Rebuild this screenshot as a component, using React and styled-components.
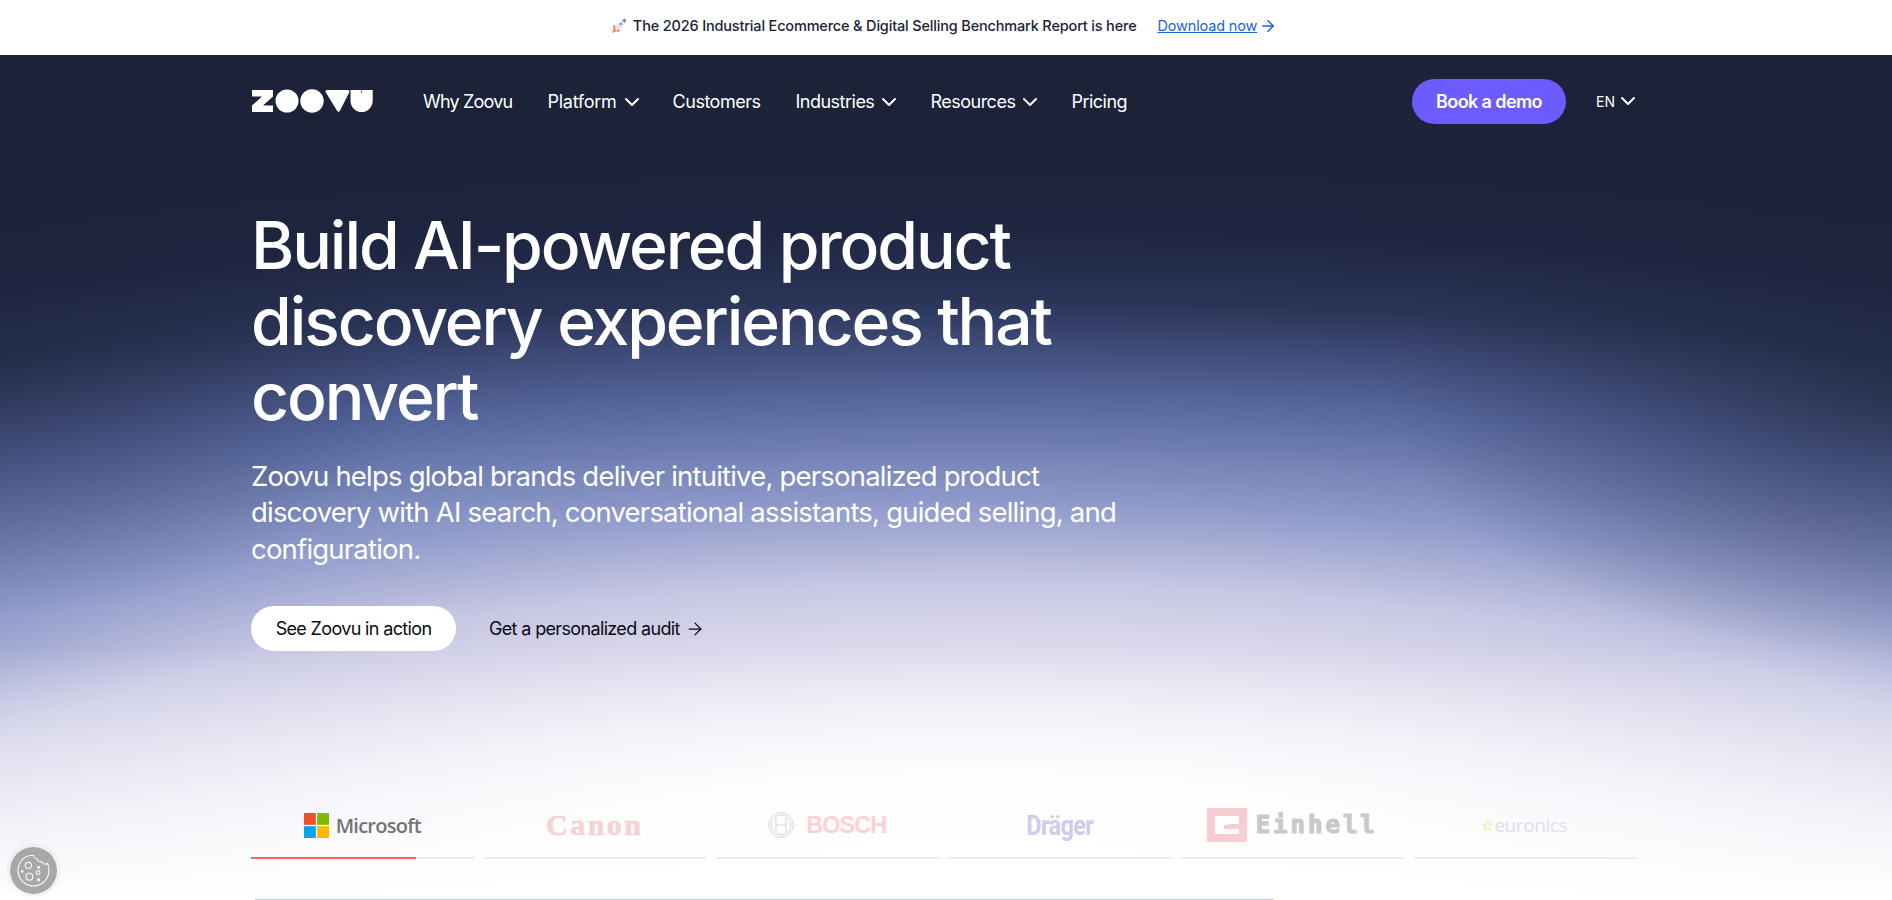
import React from "react";
import styled, { createGlobalStyle } from "styled-components";
import { ChevronDown, ArrowRight } from "lucide-react";

const GlobalStyle = createGlobalStyle`
  * { box-sizing: border-box; }
  html, body { margin: 0; padding: 0; background: #fff; overflow: hidden; }
  body { font-family: Inter, "Liberation Sans", sans-serif; color: #111; }
`;

const Page = styled.div`
  width: 1892px;
  height: 900px;
  overflow: hidden;
  position: relative;
`;

const Announce = styled.div`
  height: 55px;
  background: #fff;
  display: flex;
  align-items: center;
  justify-content: center;
  gap: 21px;
  font-size: 14.5px;
  font-weight: 500;
  letter-spacing: -0.17px;
  color: #1c2338;
  padding: 0 4px 4px 0;
`;

const AnnounceText = styled.span`
  display: inline-flex;
  align-items: center;
  gap: 6px;
`;

const AnnounceLink = styled.a`
  display: inline-flex;
  align-items: center;
  gap: 2px;
  color: #1a62d8;
  font-weight: 400;
  span { text-decoration: underline; }
`;

const Hero = styled.section`
  position: relative;
  height: 845px;
  background:
    linear-gradient(180deg, rgba(255, 255, 255, 0) 70%, #fff 100%),
    radial-gradient(ellipse 500px 260px at 1892px 340px, rgba(28, 35, 56, 0.55), rgba(28, 35, 56, 0)),
    radial-gradient(ellipse 420px 240px at 0 320px, rgba(28, 35, 56, 0.35), rgba(28, 35, 56, 0)),
    radial-gradient(
      ellipse 2700px 750px at 980px 845px,
      #fff 0%,
      #fbfafd 17%,
      #ebe9f4 27%,
      #c8c8e4 42%,
      #8e9aca 53%,
      #56679e 67%,
      #2a3457 80%,
      #1e2540 90%,
      #1c2338 100%
    );
`;

const Container = styled.div`
  width: 1385px;
  margin-left: 251px;
`;

const Nav = styled.nav`
  height: 92px;
  display: flex;
  align-items: center;
  justify-content: space-between;
  color: #fff;
`;

const NavLeft = styled.div`
  display: flex;
  align-items: center;
  padding-top: 1px;
`;

const Logo = styled.svg`
  width: 123px;
  height: 24px;
  margin: -1px 49px 0 0;
  display: block;
`;

const NavItem = styled.a`
  display: inline-flex;
  align-items: center;
  gap: 3px;
  font-size: 18px;
  letter-spacing: ${(p) => p.$spacing ?? -0.5}px;
  margin-right: 35px;
`;

const Chevron = styled(ChevronDown)`
  margin-right: -6px;
  flex-shrink: 0;
`;

const NavRight = styled.div`
  display: flex;
  align-items: center;
  gap: 30px;
  padding-right: 2px;
`;

const DemoButton = styled.a`
  height: 45px;
  width: 154px;
  border-radius: 23px;
  background: #6c5cff;
  display: flex;
  align-items: center;
  justify-content: center;
  font-size: 18px;
  font-weight: 600;
  letter-spacing: -0.6px;
`;

const Lang = styled.div`
  display: flex;
  align-items: center;
  gap: 1px;
  font-size: 14px;
  width: 38px;
`;

const Heading = styled.h1`
  margin: 61px 0 0;
  width: 880px;
  font-size: 66px;
  line-height: 75.5px;
  font-weight: 500;
  letter-spacing: -2.1px;
  color: #fff;
`;

const Sub = styled.p`
  margin: 23px 0 0;
  width: 880px;
  font-size: 27.5px;
  line-height: 36.5px;
  letter-spacing: -0.8px;
  color: #fff;
`;

const Actions = styled.div`
  display: flex;
  align-items: center;
  margin-top: 39px;
  gap: 33px;
`;

const PrimaryAction = styled.a`
  width: 205px;
  height: 45px;
  border-radius: 23px;
  background: #fff;
  display: flex;
  align-items: center;
  justify-content: center;
  font-size: 18px;
  letter-spacing: -0.65px;
  color: #0b0b14;
`;

const SecondaryAction = styled.a`
  display: inline-flex;
  align-items: center;
  gap: 5px;
  font-size: 18px;
  letter-spacing: -0.65px;
  color: #0b0b14;
`;

const Tabs = styled.div`
  display: grid;
  grid-template-columns: repeat(6, 1fr);
  gap: 10px;
  margin-top: 142px;
`;

const Tab = styled.div`
  height: 66px;
  display: flex;
  flex-direction: column;
`;

const LogoSlot = styled.div`
  flex: 1;
  display: flex;
  align-items: center;
  justify-content: center;
  gap: ${(p) => p.$gap || 7}px;
`;

const Progress = styled.div`
  height: 2px;
  background: #ececef;
`;

const ProgressFill = styled.div`
  height: 2px;
  background: #f8645c;
`;

const MsWord = styled.span`
  font-family: "Open Sans", sans-serif;
  font-size: 20px;
  font-weight: 600;
  letter-spacing: -0.75px;
  color: #737373;
`;

const CanonWord = styled.span`
  font-family: "Liberation Serif", serif;
  font-size: 30px;
  font-weight: 700;
  letter-spacing: 2.5px;
  -webkit-text-stroke: 0.6px #f7d2d4;
  color: #f7d2d4;
`;

const BoschWord = styled.span`
  font-family: "Liberation Sans", sans-serif;
  font-size: 23.5px;
  font-weight: 700;
  letter-spacing: -1px;
  color: #fcd0d4;
`;

const DragerWord = styled.span`
  display: inline-block;
  font-family: "Roboto", sans-serif;
  font-size: 28px;
  font-weight: 700;
  letter-spacing: -0.8px;
  transform: scaleX(0.84);
  color: #cccdeb;
`;

const EinhellWord = styled.span`
  font-family: "DejaVu Sans Mono", monospace;
  font-size: 24px;
  font-weight: 700;
  letter-spacing: 3px;
  -webkit-text-stroke: 1.2px #c9c9c9;
  color: #c9c9c9;
`;

const EuronicsWord = styled.span`
  font-family: "Open Sans", sans-serif;
  font-size: 19px;
  letter-spacing: -0.4px;
  color: #dcdeee;
`;

const VideoEdge = styled.div`
  width: 1019px;
  margin: 40px 0 0 4px;
  height: 300px;
  border-top: 1px solid #c8ccd8;
`;

const CookieBadge = styled.button`
  position: absolute;
  left: 9px;
  top: 846px;
  width: 49px;
  height: 49px;
  padding: 0;
  border-radius: 50%;
  background: #a8a8a8;
  border: 1px solid #fff;
  display: flex;
  align-items: center;
  justify-content: center;
  box-shadow: 0 0 4px rgba(0, 0, 0, 0.12);
`;

const Rocket = () => (
  <svg width="16" height="16" viewBox="0 0 16 16">
    <path d="M3 9L1 15l6-2z" fill="#f59a3c" />
    <path d="M3.5 7L1.5 9l3 1zM9 11.500L7 14.500l-1-3z" fill="#e8487e" />
    <path d="M4 10.500C5 6 9 2 15 1c-.8 6-4.500 10-9 11.500z" fill="#e6e4ee" />
    <path d="M11 1.800L15 1c-.2 1.400-.5 2.700-1 4z" fill="#e8487e" />
    <circle cx="9.800" cy="6" r="1.300" fill="#7d9bd1" />
  </svg>
);

const MsLogo = () => (
  <svg width="25" height="25" viewBox="0 0 26 26">
    <rect width="12.3" height="12.3" fill="#f25022" />
    <rect x="13.7" width="12.3" height="12.3" fill="#7fba00" />
    <rect y="13.7" width="12.3" height="12.3" fill="#00a4ef" />
    <rect x="13.7" y="13.7" width="12.3" height="12.3" fill="#ffb900" />
  </svg>
);

const BoschMark = () => (
  <svg width="26" height="26" viewBox="0 0 26 26" fill="none" stroke="#d6d6d6">
    <circle cx="13" cy="13" r="12.300" strokeWidth="1" />
    <circle cx="13" cy="13" r="10" strokeWidth="1" />
    <path d="M8 6v14M18 6v14M8 13h10" strokeWidth="1" />
  </svg>
);

const EinhellMark = () => (
  <svg width="40" height="34" viewBox="0 0 40 34">
    <rect width="40" height="34" fill="#f7ccd2" />
    <path d="M8 8h24v8H20v1h-3v4h15v5H8z" fill="#fff" />
  </svg>
);

const StarMark = () => (
  <svg width="11" height="11" viewBox="0 0 24 24" fill="none" stroke="#f3efb8" strokeWidth="3">
    <path d="M12 2l3 7h7l-6 5 2 8-6-4-6 4 2-8-6-5h7z" />
  </svg>
);

const CookieMark = () => (
  <svg width="33" height="33" viewBox="0 0 32 32" fill="none" stroke="#fff" strokeWidth="1">
    <path d="M13 1.500C5.500 2.500 1 9 1 16a15 15 0 0 0 30 0c0-3-.5-5-1.500-7-2 1.500-4.500 1-5-1.500-2.500.5-5-.5-5-3-2 0-3.500-1.500-3.500-3z" />
    <circle cx="11" cy="11" r="3" />
    <circle cx="12" cy="22" r="3.300" />
    <circle cx="20.500" cy="18" r="1.800" />
    <circle cx="5" cy="17" r="0.800" fill="#fff" />
    <circle cx="21" cy="13" r="0.800" fill="#fff" />
    <circle cx="21" cy="25" r="1" fill="#fff" />
  </svg>
);

export default function App() {
  return (
    <Page>
      <GlobalStyle />
      <Announce>
        <AnnounceText>
          <Rocket />
          The 2026 Industrial Ecommerce &amp; Digital Selling Benchmark Report is here
        </AnnounceText>
        <AnnounceLink>
          <span>Download now</span>
          <ArrowRight size={18} />
        </AnnounceLink>
      </Announce>
      <Hero>
        <Container>
          <Nav>
            <NavLeft>
              <Logo viewBox="0 0 123 24" fill="#fff">
                <path d="M1 1h21v6.500L12 16.500h10V23H1v-6.500L11 7.500H1z" />
                <circle cx="36" cy="12" r="11.500" />
                <circle cx="61" cy="12" r="11.700" />
                <path d="M76 1h21a1.500 1.500 0 0 1 1.300 2.200L88.800 22a1.500 1.500 0 0 1-2.600 0L74.700 3.200A1.500 1.500 0 0 1 76 1z" />
                <path d="M99.500 1h10.800v3h.6V1h10.800v10.500a11 11.500 0 0 1-22.200 0z" />
              </Logo>
              <NavItem $spacing={-0.8}>Why Zoovu</NavItem>
              <NavItem $spacing={-0.25}>Platform <Chevron size={24} /></NavItem>
              <NavItem>Customers</NavItem>
              <NavItem>Industries <Chevron size={24} /></NavItem>
              <NavItem>Resources <Chevron size={24} /></NavItem>
              <NavItem>Pricing</NavItem>
            </NavLeft>
            <NavRight>
              <DemoButton>Book a demo</DemoButton>
              <Lang>EN <Chevron size={24} /></Lang>
            </NavRight>
          </Nav>
          <Heading>Build AI-powered product discovery experiences that convert</Heading>
          <Sub>Zoovu helps global brands deliver intuitive, personalized product discovery with AI search, conversational assistants, guided selling, and configuration.</Sub>
          <Actions>
            <PrimaryAction>See Zoovu in action</PrimaryAction>
            <SecondaryAction>Get a personalized audit <ArrowRight size={20} strokeWidth={1.5} /></SecondaryAction>
          </Actions>
          <Tabs>
            <Tab>
              <LogoSlot><MsLogo /><MsWord>Microsoft</MsWord></LogoSlot>
              <Progress><ProgressFill style={{ width: "74%" }} /></Progress>
            </Tab>
            <Tab>
              <LogoSlot><CanonWord>Canon</CanonWord></LogoSlot>
              <Progress />
            </Tab>
            <Tab>
              <LogoSlot $gap={12}><BoschMark /><BoschWord>BOSCH</BoschWord></LogoSlot>
              <Progress />
            </Tab>
            <Tab>
              <LogoSlot><DragerWord>Dräger</DragerWord></LogoSlot>
              <Progress />
            </Tab>
            <Tab>
              <LogoSlot $gap={9}><EinhellMark /><EinhellWord>Einhell</EinhellWord></LogoSlot>
              <Progress />
            </Tab>
            <Tab>
              <LogoSlot $gap={1}><StarMark /><EuronicsWord>euronics</EuronicsWord></LogoSlot>
              <Progress />
            </Tab>
          </Tabs>
          <VideoEdge />
        </Container>
      </Hero>
      <CookieBadge><CookieMark /></CookieBadge>
    </Page>
  );
}
